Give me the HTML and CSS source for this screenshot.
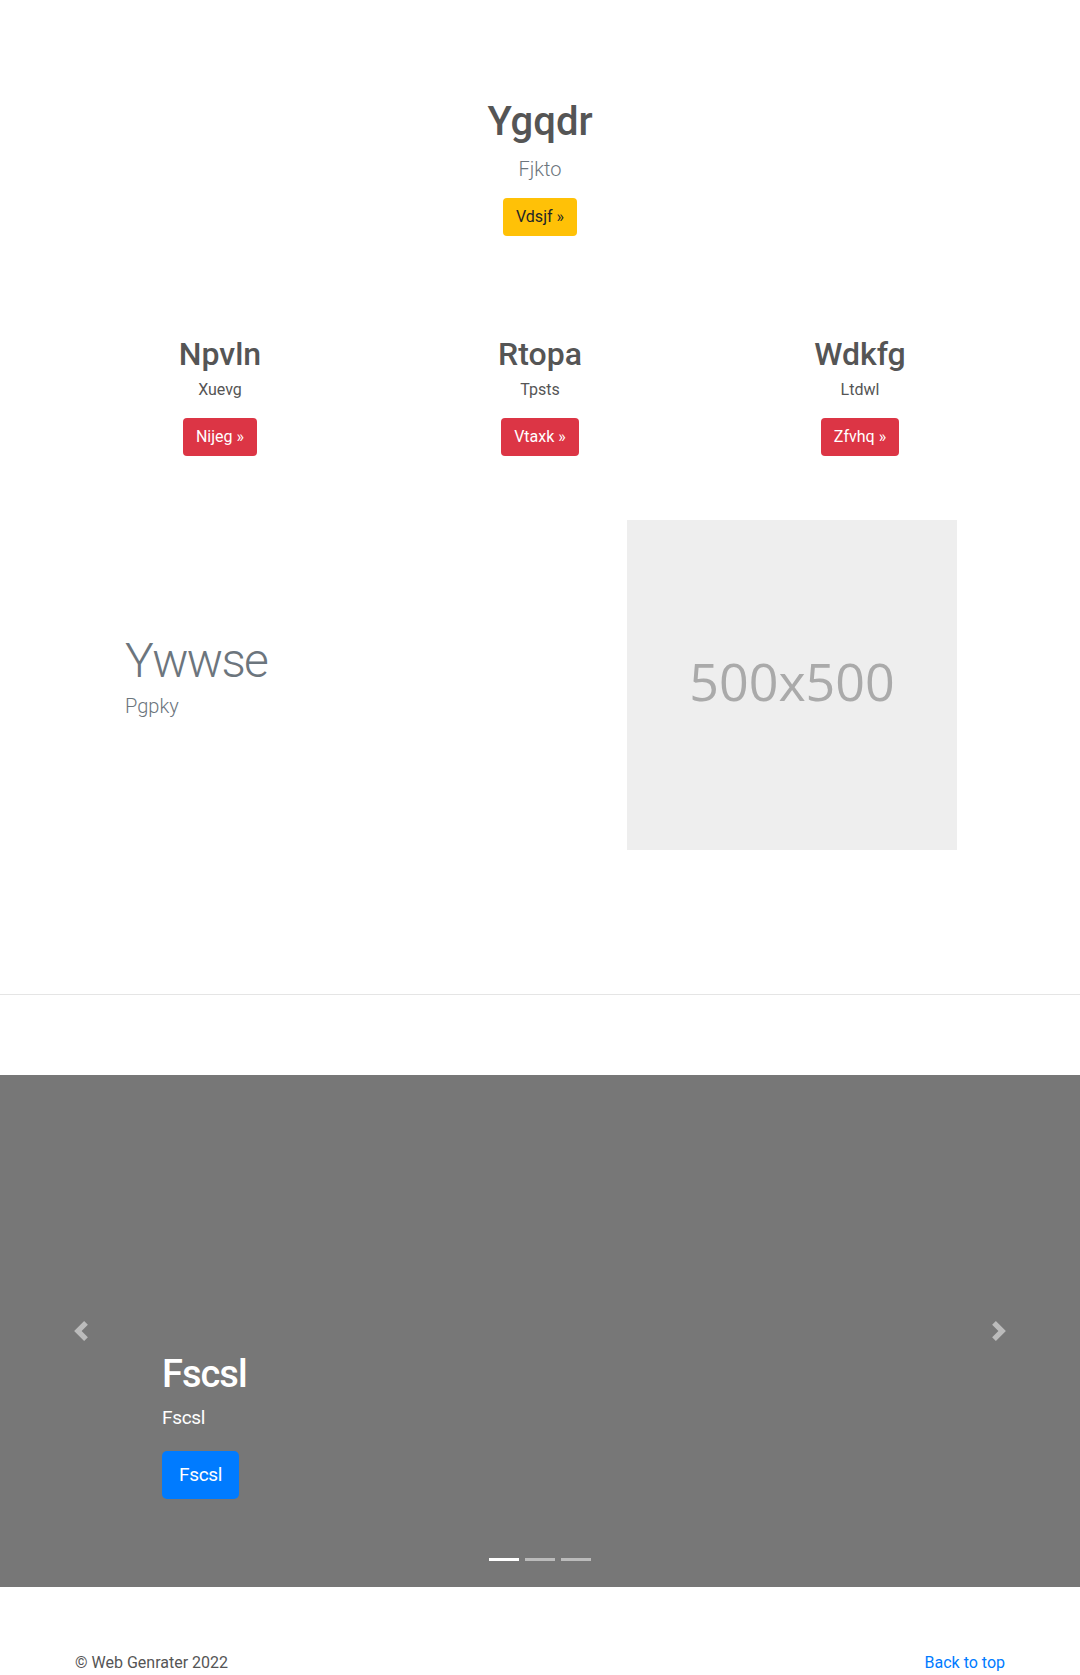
FILE: index.html
```html
<!DOCTYPE html>
<html lang="en">
<head>
<meta charset="utf-8">
<title>Ygqdr</title>
<link rel="stylesheet" href="styles.css">
</head>
<body>
<main>
  <section class="hero">
    <h1 class="hero-title">Ygqdr</h1>
    <p class="lead muted">Fjkto</p>
    <a class="btn btn-warning" href="#">Vdsjf &raquo;</a>
  </section>

  <section class="container marketing">
    <div class="marketing-col">
      <h2 class="marketing-title">Npvln</h2>
      <p class="marketing-text">Xuevg</p>
      <a class="btn btn-danger" href="#">Nijeg &raquo;</a>
    </div>
    <div class="marketing-col">
      <h2 class="marketing-title">Rtopa</h2>
      <p class="marketing-text">Tpsts</p>
      <a class="btn btn-danger" href="#">Vtaxk &raquo;</a>
    </div>
    <div class="marketing-col">
      <h2 class="marketing-title">Wdkfg</h2>
      <p class="marketing-text">Ltdwl</p>
      <a class="btn btn-danger" href="#">Zfvhq &raquo;</a>
    </div>
  </section>

  <section class="container featurette">
    <div class="featurette-text">
      <h2 class="featurette-heading">Ywwse</h2>
      <p class="lead muted">Pgpky</p>
    </div>
    <div class="featurette-media">
      <div class="placeholder">500x500</div>
    </div>
  </section>

  <hr class="divider">

  <div class="carousel">
    <div class="carousel-caption">
      <h1 class="caption-title">Fscsl</h1>
      <p class="caption-text">Fscsl</p>
      <div class="caption-actions">
        <a class="btn btn-lg btn-primary" href="#">Fscsl</a>
      </div>
    </div>
    <a class="carousel-control prev" href="#" aria-label="Previous">
      <svg class="control-icon" viewBox="0 0 8 8" width="20" height="20"><path fill="#fff" d="M5.25 0l-4 4 4 4 1.5-1.5L4.25 4l2.5-2.5L5.25 0z"/></svg>
    </a>
    <a class="carousel-control next" href="#" aria-label="Next">
      <svg class="control-icon" viewBox="0 0 8 8" width="20" height="20"><path fill="#fff" d="M2.75 0l-1.5 1.5L3.75 4l-2.5 2.5L2.75 8l4-4-4-4z"/></svg>
    </a>
    <ol class="carousel-indicators">
      <li class="active"></li>
      <li></li>
      <li></li>
    </ol>
  </div>
</main>

<footer class="container footer">
  <p>&copy; Web Genrater 2022</p>
  <p><a class="link" href="#">Back to top</a></p>
</footer>
</body>
</html>
```

FILE: styles.css
```css
* { box-sizing: border-box; }

body {
  margin: 0;
  font-family: Roboto, "Liberation Sans", sans-serif;
  font-size: 16px;
  line-height: 1.5;
  color: #555;
  background: #fff;
}

h1, h2, p { margin: 0; }

.container {
  width: 960px;
  margin: 0 auto;
  padding: 0 15px;
}

.muted { color: #6c757d; }

.lead {
  font-size: 20px;
  font-weight: 300;
  line-height: 30px;
}

.btn {
  display: inline-block;
  padding: 6px 12px;
  font-size: 16px;
  line-height: 24px;
  border: 1px solid transparent;
  border-radius: 4px;
  text-decoration: none;
  vertical-align: middle;
}
.btn-warning { background: #ffc107; color: #212529; }
.btn-danger { background: #dc3545; color: #fff; }
.btn-primary { background: #007bff; color: #fff; }
.btn-lg {
  padding: 8px 16px;
  font-size: 19px;
  line-height: 30px;
  letter-spacing: -0.3px;
  border-radius: 5px;
}

/* hero */
.hero {
  text-align: center;
  padding-top: 98px;
}
.hero-title {
  font-size: 40px;
  font-weight: 500;
  line-height: 1.2;
  margin-bottom: 8px;
}
.hero .lead { margin-bottom: 14px; }

/* marketing */
.marketing {
  display: grid;
  grid-template-columns: repeat(3, 1fr);
  margin-top: 99px;
  padding: 0;
  text-align: center;
}
.marketing-title {
  font-size: 32px;
  font-weight: 500;
  line-height: 1.2;
  margin-bottom: 5px;
}
.marketing-text {
  font-size: 16px;
  margin-bottom: 16px;
}

/* featurette */
.featurette {
  display: flex;
  margin-top: 64px;
  padding: 0;
}
.featurette-text {
  width: 480px;
  padding: 117px 0 0 65px;
}
.featurette-heading {
  font-size: 48px;
  font-weight: 300;
  line-height: 1;
  letter-spacing: -1.6px;
  color: #6c757d;
  margin-bottom: 6px;
}
.featurette-media {
  width: 480px;
  padding-left: 87px;
}
.placeholder {
  width: 330px;
  height: 330px;
  background: #eee;
  color: #aaa;
  display: flex;
  align-items: center;
  justify-content: center;
  font-family: "Open Sans", "Noto Sans", sans-serif;
  font-size: 52px;
  padding-bottom: 8px;
}

/* divider */
.divider {
  margin: 144px 0 80px;
  border: 0;
  border-top: 1px solid #e5e5e5;
  height: 0;
}

/* carousel */
.carousel {
  position: relative;
  height: 512px;
  background: #777;
  margin-bottom: 64px;
}
.carousel-caption {
  position: absolute;
  left: 15%;
  right: 15%;
  bottom: 88px;
  padding-top: 20px;
  color: #fff;
  z-index: 10;
}
.caption-title {
  font-size: 38px;
  font-weight: 500;
  line-height: 1.2;
  letter-spacing: -1px;
  margin-bottom: 6px;
}
.caption-text {
  font-size: 19px;
  line-height: 30px;
  letter-spacing: -0.3px;
  margin-bottom: 18px;
}
.caption-actions { display: flex; }

.carousel-control {
  position: absolute;
  top: 0;
  bottom: 0;
  width: 15%;
  display: flex;
  align-items: center;
  justify-content: center;
  opacity: 0.5;
}
.carousel-control.prev { left: 0; }
.carousel-control.next { right: 0; }
.control-icon { display: block; }

.carousel-indicators {
  position: absolute;
  left: 0;
  right: 0;
  bottom: 0;
  margin: 0 0 16px;
  padding: 0;
  list-style: none;
  display: flex;
  justify-content: center;
}
.carousel-indicators li {
  width: 30px;
  height: 3px;
  margin: 10px 3px;
  background: #fff;
  opacity: 0.5;
}
.carousel-indicators li.active { opacity: 1; }

/* footer */
.footer {
  display: flex;
  justify-content: space-between;
  padding: 0 15px 16px 15px;
}
.link { color: #007bff; text-decoration: none; }
```
